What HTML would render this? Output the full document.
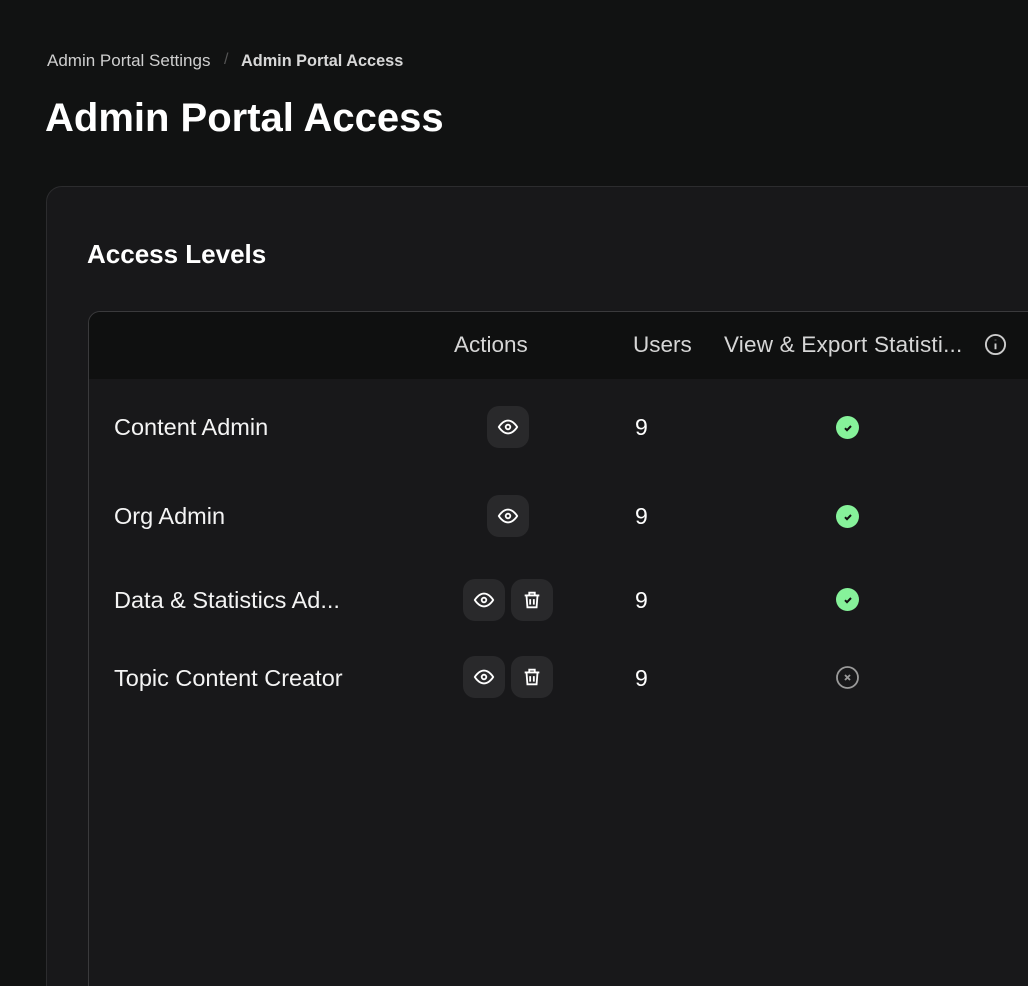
<!DOCTYPE html>
<html><head><style>
*{margin:0;padding:0;box-sizing:border-box}
html{width:1028px;height:986px;overflow:hidden}
body{width:1028px;height:986px;background:#111212;font-family:"Liberation Sans",sans-serif;color:#fff;position:relative;overflow:hidden}
.a{position:absolute;white-space:nowrap}
.card{position:absolute;left:46px;top:186px;width:1020px;height:830px;background:#18181a;border:1px solid #2c2c2e;border-radius:16px}
.tbl{position:absolute;left:88px;top:311px;width:980px;height:700px;background:#18181a;border:1.5px solid #3a3a3c;border-radius:12px;overflow:hidden}
.hdr{position:absolute;left:0;top:0;right:0;height:67px;background:#0f1010}
.btn{position:absolute;width:42px;height:42px;border-radius:12px;background:#29292b;display:flex;align-items:center;justify-content:center}
.row{font-size:23.5px;color:#f4f4f4}
.num{font-size:23px;color:#fff}
.chk{position:absolute;width:23px;height:23px;border-radius:50%;background:#86f29a;display:flex;align-items:center;justify-content:center}
</style></head><body>
<div class="a" style="left:47px;top:51px;font-size:17px;color:#cfcfcf">Admin Portal Settings</div>
<div class="a" style="left:224px;top:51px;font-size:16px;color:#555">/</div>
<div class="a" style="left:241px;top:52px;font-size:16.3px;color:#d8d8d8;font-weight:bold">Admin Portal Access</div>
<div class="a" style="left:45px;top:96px;font-size:40px;font-weight:bold;color:#fff">Admin Portal Access</div>
<div class="card"></div>
<div class="a" style="left:87px;top:239px;font-size:26px;font-weight:bold">Access Levels</div>
<div class="tbl"><div class="hdr"></div></div>
<div class="a" style="left:454px;top:332px;font-size:22.5px;color:#d6d6d6">Actions</div>
<div class="a" style="left:633px;top:332px;font-size:22.5px;color:#d6d6d6">Users</div>
<div class="a" style="left:724px;top:332px;font-size:22.5px;color:#d6d6d6;letter-spacing:0.2px">View &amp; Export Statisti...</div>
<svg class="a" style="left:984px;top:333px" width="23" height="23" viewBox="0 0 24 24" fill="none" stroke="#ccc" stroke-width="2"><circle cx="12" cy="12" r="10"/><path d="M12 11v6M12 7v.5"/></svg>

<div class="a row" style="left:114px;top:414px">Content Admin</div>
<div class="a row" style="left:114px;top:503px">Org Admin</div>
<div class="a row" style="left:114px;top:587px">Data &amp; Statistics Ad...</div>
<div class="a row" style="left:114px;top:665px">Topic Content Creator</div>

<div class="a num" style="left:635px;top:414px">9</div>
<div class="a num" style="left:635px;top:503px">9</div>
<div class="a num" style="left:635px;top:587px">9</div>
<div class="a num" style="left:635px;top:665px">9</div>

<div class="btn" style="left:487px;top:406px"><svg width="22" height="22" viewBox="0 0 24 24" fill="none" stroke="#fff" stroke-width="2"><path d="M2 12s4-7 10-7 10 7 10 7-4 7-10 7S2 12 2 12z"/><circle cx="12" cy="12" r="2.5"/></svg></div>
<div class="btn" style="left:487px;top:495px"><svg width="22" height="22" viewBox="0 0 24 24" fill="none" stroke="#fff" stroke-width="2"><path d="M2 12s4-7 10-7 10 7 10 7-4 7-10 7S2 12 2 12z"/><circle cx="12" cy="12" r="2.5"/></svg></div>
<div class="btn" style="left:463px;top:579px"><svg width="22" height="22" viewBox="0 0 24 24" fill="none" stroke="#fff" stroke-width="2"><path d="M2 12s4-7 10-7 10 7 10 7-4 7-10 7S2 12 2 12z"/><circle cx="12" cy="12" r="2.5"/></svg></div>
<div class="btn" style="left:511px;top:579px"><svg width="22" height="22" viewBox="0 0 24 24" fill="none" stroke="#fff" stroke-width="2"><path d="M4 7h16M9 7V4h6v3M6 7l1 13h10l1-13M10 11v6M14 11v6"/></svg></div>
<div class="btn" style="left:463px;top:656px"><svg width="22" height="22" viewBox="0 0 24 24" fill="none" stroke="#fff" stroke-width="2"><path d="M2 12s4-7 10-7 10 7 10 7-4 7-10 7S2 12 2 12z"/><circle cx="12" cy="12" r="2.5"/></svg></div>
<div class="btn" style="left:511px;top:656px"><svg width="22" height="22" viewBox="0 0 24 24" fill="none" stroke="#fff" stroke-width="2"><path d="M4 7h16M9 7V4h6v3M6 7l1 13h10l1-13M10 11v6M14 11v6"/></svg></div>

<div class="chk" style="left:836px;top:416px"><svg width="12" height="12" viewBox="0 0 12 12" fill="none" stroke="#111" stroke-width="2"><path d="M3 6.2l2 2L9 4"/></svg></div>
<div class="chk" style="left:836px;top:505px"><svg width="12" height="12" viewBox="0 0 12 12" fill="none" stroke="#111" stroke-width="2"><path d="M3 6.2l2 2L9 4"/></svg></div>
<div class="chk" style="left:836px;top:588px"><svg width="12" height="12" viewBox="0 0 12 12" fill="none" stroke="#111" stroke-width="2"><path d="M3 6.2l2 2L9 4"/></svg></div>
<svg class="a" style="left:835px;top:665px" width="25" height="25" viewBox="0 0 25 25" fill="none" stroke="#9a9a9a" stroke-width="1.8"><circle cx="12.5" cy="12.5" r="10.5"/><path d="M10 10l5 5M15 10l-5 5"/></svg>
</body></html>
